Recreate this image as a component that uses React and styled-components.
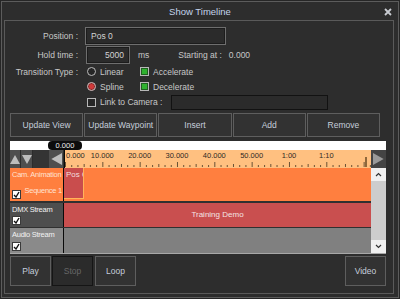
import styled, { createGlobalStyle } from "styled-components";

const GlobalStyle = createGlobalStyle`
  html, body {
    margin: 0;
    padding: 0;
    background: #262626;
  }
  body {
    font-family: "Liberation Sans", Arial, sans-serif;
    font-size: 8.5px;
    color: #c8c8c8;
  }
`;

const MAJOR = 37.33;
const LABELS = ["0.000", "10.000", "20.000", "30.000", "40.000", "50.000", "1:00", "1:10"];

const Window = styled.div`
  box-sizing: border-box;
  width: 398px;
  height: 297px;
  margin: 1px 0 0 1px;
  border: 1px solid #5c5c5c;
  background: #2d2d2d;
  display: flex;
  flex-direction: column;
`;

const TitleBar = styled.div`
  height: 18px;
  flex: none;
  display: flex;
  align-items: center;
  justify-content: center;
  position: relative;
  font-size: 9.5px;
  color: #c4d4ec;
`;

const CloseButton = styled.svg`
  position: absolute;
  right: 6px;
  top: 6px;
`;

const Panel = styled.div`
  box-sizing: border-box;
  height: 274px;
  margin: 0 4px 3px 2px;
  border: 1px solid #5a5a5a;
  padding: 6px 6px 0 5px;
  display: flex;
  flex-direction: column;
`;

const Form = styled.div`
  display: grid;
  grid-template-columns: 68px 1fr;
  column-gap: 8px;
  grid-auto-rows: auto;
`;

const Label = styled.div`
  text-align: right;
  align-self: center;
  white-space: nowrap;
`;

const Row = styled.div`
  display: flex;
  align-items: center;
  height: ${(p) => p.$h || 15}px;
  margin-top: ${(p) => p.$mt || 0}px;
`;

const TextBox = styled.div`
  box-sizing: border-box;
  width: ${(p) => p.$w}px;
  height: ${(p) => p.$h || 18}px;
  border: 1px solid ${(p) => (p.$dark ? "#121212" : "#6e6e6e")};
  box-shadow: ${(p) => (p.$dark ? "none" : "inset 0 0 0 1px #1c1c1c")};
  background: #2b2b2b;
  color: #d4d4d4;
  display: flex;
  align-items: center;
  justify-content: ${(p) => (p.$right ? "flex-end" : "flex-start")};
  padding: 0 5px 0 5px;
  margin-left: ${(p) => p.$ml || 0}px;
`;

const Text = styled.span`
  margin-left: ${(p) => p.$ml || 0}px;
  white-space: nowrap;
`;

const Option = styled.div`
  display: flex;
  align-items: center;
  width: ${(p) => (p.$w ? `${p.$w}px` : "auto")};
  gap: 4px;
  margin-left: 1px;
`;

const Radio = styled.span`
  box-sizing: border-box;
  width: 9px;
  height: 9px;
  border-radius: 50%;
  border: 1px solid #bdbdbd;
  background: ${(p) => (p.$on ? "#d23a3a" : "#262626")};
  box-shadow: ${(p) => (p.$on ? "inset 0 0 0 1px #8a2a2a" : "none")};
`;

const Check = styled.span`
  box-sizing: border-box;
  width: 9px;
  height: 9px;
  border: 1px solid #b8b8b8;
  background: ${(p) => (p.$on ? "#2fb12f" : "#262626")};
  box-shadow: ${(p) => (p.$on ? "inset 0 0 0 1px #1f5f1f" : "none")};
`;

const ButtonRow = styled.div`
  display: grid;
  grid-template-columns: repeat(5, 1fr);
  gap: 1px;
  width: 370px;
  height: 24px;
  margin-top: 3px;
`;

const Button = styled.div`
  box-sizing: border-box;
  border: 1px solid ${(p) => (p.$disabled ? "#151515" : "#5e5e5e")};
  background: ${(p) => (p.$disabled ? "#2b2b2b" : "#323232")};
  color: ${(p) => (p.$disabled ? "#676767" : "#c6cedc")};
  display: flex;
  align-items: center;
  justify-content: center;
  white-space: nowrap;
  width: ${(p) => (p.$w ? `${p.$w}px` : "auto")};
  height: ${(p) => (p.$h ? `${p.$h}px` : "auto")};
  margin-left: ${(p) => p.$ml || 0}px;
`;

const Timeline = styled.div`
  margin-top: 4px;
  width: 376px;
  display: flex;
  flex-direction: column;
  border-bottom: 1px solid #a8a8a8;
`;

const TimeStrip = styled.div`
  height: 9px;
  background: #ffffff;
  position: relative;
`;

const Cursor = styled.div`
  position: absolute;
  left: 38px;
  top: 0;
  width: 34px;
  height: 9px;
  border-radius: 4px;
  background: #0c0c0c;
  color: #f0f0f0;
  font-size: 7.5px;
  display: flex;
  align-items: center;
  justify-content: center;
`;

const RulerRow = styled.div`
  display: flex;
  height: 18px;
`;

const NavGroup = styled.div`
  width: 54px;
  display: flex;
  background: #343434;
  border-right: 1px solid #0a0a0a;
`;

const NavButton = styled.div`
  width: ${(p) => p.$w}px;
  margin-left: ${(p) => p.$ml || 0}px;
  background: #4e4e4e;
  display: flex;
  align-items: center;
  justify-content: center;
  border-right: 1px solid #2c2c2c;
`;

const Ruler = styled.div`
  position: relative;
  width: 306px;
  background: #ffc080;
  overflow: hidden;
`;

const RulerLabel = styled.span`
  position: absolute;
  top: 1px;
  font-size: 7.5px;
  color: #2f2a25;
  white-space: nowrap;
  transform: ${(p) => (p.$first ? "none" : "translateX(-50%)")};
`;

const SideButton = styled.div`
  width: 15px;
  background: #444444;
  display: flex;
  align-items: center;
  justify-content: center;
`;

const TrackArea = styled.div`
  display: flex;
  height: 85px;
`;

const TrackList = styled.div`
  width: 361px;
  display: flex;
  flex-direction: column;
  background: #303030;
`;

const Track = styled.div`
  display: flex;
  height: ${(p) => p.$h}px;
  margin-top: ${(p) => p.$mt || 0}px;
`;

const TrackHeader = styled.div`
  box-sizing: border-box;
  width: 54px;
  flex: none;
  background: ${(p) => p.$bg};
  color: ${(p) => p.$fg || "#f2f2f2"};
  padding: 2px 1px 2px 2px;
  display: flex;
  flex-direction: column;
  position: relative;
  border-right: 1px solid #0a0a0a;
  white-space: nowrap;
  font-size: 7.5px;
  letter-spacing: -0.25px;
`;

const HeaderSub = styled.div`
  text-align: right;
  margin-top: 7px;
`;

const HeaderCheck = styled.span`
  box-sizing: border-box;
  position: absolute;
  left: 2px;
  bottom: 2px;
  width: 9px;
  height: 9px;
  background: #ffffff;
  border: 1px solid #3a3a3a;
  display: flex;
  align-items: center;
  justify-content: center;
`;

const TrackBody = styled.div`
  flex: 1;
  min-width: 0;
  background: ${(p) => p.$bg};
  color: #f4e4e4;
  display: flex;
  align-items: flex-start;
  justify-content: ${(p) => (p.$center ? "center" : "flex-start")};
  padding-top: ${(p) => (p.$center ? 7 : 0)}px;
  font-size: 8px;
`;

const Clip = styled.div`
  box-sizing: border-box;
  width: 20px;
  height: 31px;
  background: #c94d4d;
  border-right: 1px solid #ffb45a;
  border-bottom: 1px solid #ffb45a;
  overflow: hidden;
  white-space: nowrap;
  padding: 2px 0 0 2px;
  color: #f2dede;
`;

const Scrollbar = styled.div`
  width: 15px;
  background: #cdcdcd;
  display: flex;
  flex-direction: column;
  justify-content: space-between;
`;

const ScrollArrow = styled.div`
  height: 13px;
  background: #f0f0f0;
  display: flex;
  align-items: center;
  justify-content: center;
`;

const Footer = styled.div`
  display: flex;
  margin-top: 2px;
  width: 376px;
  gap: 1px;
`;

const Spacer = styled.div`
  flex: 1;
`;

function Tick() {
  return (
    <svg width="7" height="7" viewBox="0 0 7 7">
      <path d="M1 4 L3 6 L6 1" fill="none" stroke="#111" strokeWidth="1.4" />
    </svg>
  );
}

function Triangle({ dir, color = "#bdbdbd", size = 9 }) {
  const pts = {
    up: "0,9 4.5,1 9,9",
    down: "0,1 4.5,9 9,1",
    left: "9,0 1,4.5 9,9",
    right: "0,0 8,4.5 0,9",
  }[dir];
  return (
    <svg width={size} height={size} viewBox="0 0 9 9">
      <polygon points={pts} fill={color} />
    </svg>
  );
}

function Chevron({ down }) {
  return (
    <svg width="7" height="5" viewBox="0 0 7 5">
      <path d={down ? "M1 1 L3.5 3.5 L6 1" : "M1 4 L3.5 1.5 L6 4"} fill="none" stroke="#333" strokeWidth="1.2" />
    </svg>
  );
}

function RulerTicks() {
  const ticks = [];
  for (let i = 0; i <= 49; i++) {
    const x = 0.5 + (i * MAJOR) / 6;
    const h = i % 6 === 0 ? 5 : i % 3 === 0 ? 3 : 2;
    ticks.push(<line key={i} x1={x} x2={x} y1={17 - h} y2={17} stroke="#6a5236" strokeWidth="1" />);
  }
  return (
    <svg width="306" height="18" style={{ position: "absolute", left: 0, top: 0 }}>
      {ticks}
      <line x1={301} x2={301} y1={7} y2={17} stroke="#6a4a24" strokeWidth="1.5" />
    </svg>
  );
}

export default function App() {
  return (
    <>
      <GlobalStyle />
      <Window>
        <TitleBar>
          Show Timeline
          <CloseButton width="8" height="8" viewBox="0 0 8 8">
            <path d="M1 1 L7 7 M7 1 L1 7" stroke="#c9ccd2" strokeWidth="1.8" />
          </CloseButton>
        </TitleBar>
        <Panel>
          <Form>
            <Label>Position :</Label>
            <Row $h={18}>
              <TextBox $w={141} $ml={-1}>Pos 0</TextBox>
            </Row>

            <Label>Hold time :</Label>
            <Row $h={18} $mt={1}>
              <TextBox $w={44} $right>5000</TextBox>
              <Text $ml={8}>ms</Text>
              <Text $ml={29}>Starting at :</Text>
              <Text $ml={7}>0.000</Text>
            </Row>

            <Label>Transition Type :</Label>
            <Row>
              <Option $w={52}>
                <Radio />
                <span>Linear</span>
              </Option>
              <Option>
                <Check $on />
                <span>Accelerate</span>
              </Option>
            </Row>

            <div />
            <Row>
              <Option $w={52}>
                <Radio $on />
                <span>Spline</span>
              </Option>
              <Option>
                <Check $on />
                <span>Decelerate</span>
              </Option>
            </Row>

            <div />
            <Row $h={16}>
              <Option>
                <Check />
                <span>Link to Camera :</span>
              </Option>
              <TextBox $w={157} $h={15} $ml={9} $dark />
            </Row>
          </Form>

          <ButtonRow>
            <Button>Update View</Button>
            <Button>Update Waypoint</Button>
            <Button>Insert</Button>
            <Button>Add</Button>
            <Button>Remove</Button>
          </ButtonRow>

          <Timeline>
            <TimeStrip>
              <Cursor>0.000</Cursor>
            </TimeStrip>
            <RulerRow>
              <NavGroup>
                <NavButton $w={11}>
                  <Triangle dir="up" size={10} />
                </NavButton>
                <NavButton $w={11}>
                  <Triangle dir="down" size={10} />
                </NavButton>
                <NavButton $w={15} $ml={16}>
                  <Triangle dir="left" size={12} />
                </NavButton>
              </NavGroup>
              <Ruler>
                <RulerTicks />
                {LABELS.map((l, i) => (
                  <RulerLabel key={l} $first={i === 0} style={{ left: i === 0 ? 1 : i * MAJOR }}>
                    {l}
                  </RulerLabel>
                ))}
              </Ruler>
              <SideButton>
                <Triangle dir="right" color="#9a9a9a" size={12} />
              </SideButton>
            </RulerRow>
            <TrackArea>
              <TrackList>
                <Track $h={33}>
                  <TrackHeader $bg="#ff7f3f" $fg="#ffe2d2">
                    <span>Cam. Animation</span>
                    <HeaderSub>Sequence 1</HeaderSub>
                    <HeaderCheck>
                      <Tick />
                    </HeaderCheck>
                  </TrackHeader>
                  <TrackBody $bg="#ff7f3f">
                    <Clip>Pos 0</Clip>
                  </TrackBody>
                </Track>
                <Track $h={24} $mt={2}>
                  <TrackHeader $bg="#4e4e4e">
                    <span>DMX Stream</span>
                    <HeaderCheck>
                      <Tick />
                    </HeaderCheck>
                  </TrackHeader>
                  <TrackBody $bg="#c94f4f" $center>
                    Training Demo
                  </TrackBody>
                </Track>
                <Track $h={25} $mt={1}>
                  <TrackHeader $bg="#8a8a8a">
                    <span>Audio Stream</span>
                    <HeaderCheck>
                      <Tick />
                    </HeaderCheck>
                  </TrackHeader>
                  <TrackBody $bg="#808080" />
                </Track>
              </TrackList>
              <Scrollbar>
                <ScrollArrow>
                  <Chevron />
                </ScrollArrow>
                <ScrollArrow>
                  <Chevron down />
                </ScrollArrow>
              </Scrollbar>
            </TrackArea>
          </Timeline>

          <Footer>
            <Button $w={41} $h={30}>Play</Button>
            <Button $w={41} $h={30} $disabled>Stop</Button>
            <Button $w={41} $h={30} $ml={1}>Loop</Button>
            <Spacer />
            <Button $w={41} $h={30}>Video</Button>
          </Footer>
        </Panel>
      </Window>
    </>
  );
}
